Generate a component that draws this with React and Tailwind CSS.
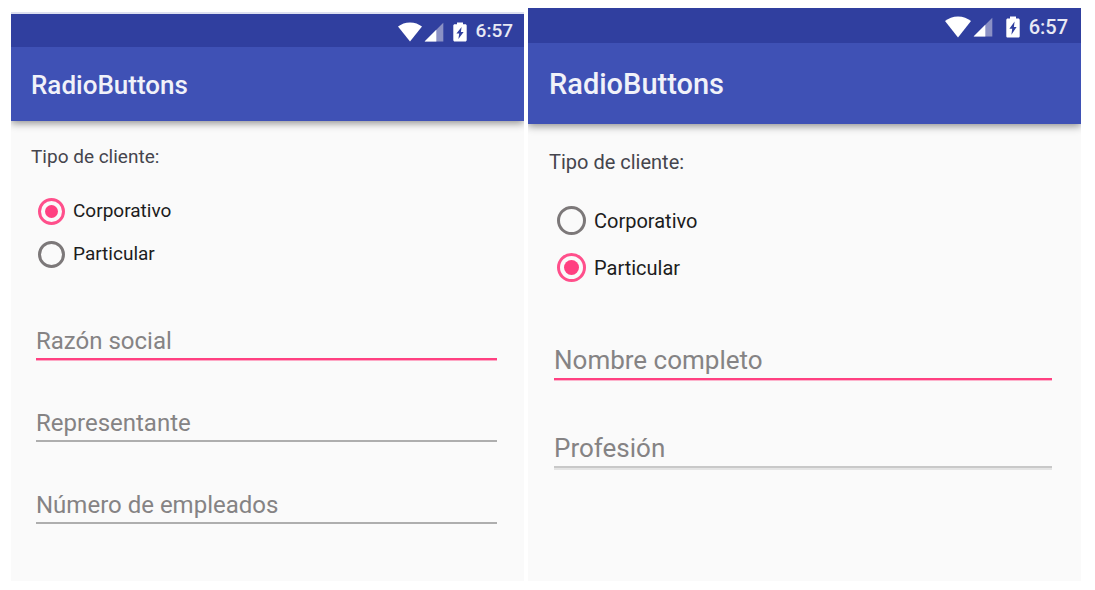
import React, { useState } from "react";

const styles = {
  small: {
    screen: "mt-1 border-t-2 border-[#dcdff0]",
    status: "h-[33px] pr-[11px] pt-0.5 text-[19px]",
    wifi: "h-5 w-6",
    signal: "ml-0.5 h-5 w-5",
    battery: "ml-2 mr-2 h-5 w-4",
    bar: "h-[74px] px-5 pt-[3px] text-[26px]",
    body: "pt-6 pb-14",
    caption: "pl-5 text-[19px] leading-6",
    group: "mt-[21px] pl-[27px]",
    option: "h-[43px] gap-2 text-[19px]",
    radio: "size-[27px] before:size-[13px]",
    fields: "mt-11 gap-[42px] pl-[25px] pr-[27px]",
    field: "h-10 pt-[3px] text-2xl",
    focused: "border-[#ff4081] shadow-[0_1px_0_#fda9c5]",
    idle: "border-[#aeaeae]",
  },
  large: {
    screen: "",
    status: "h-[35px] pr-[13px] pt-0.5 text-[20px]",
    wifi: "h-[22px] w-[26px]",
    signal: "ml-0.5 h-5 w-5",
    battery: "ml-3 mr-2 h-[22px] w-4",
    bar: "h-[81px] px-[21px] pt-[3px] text-[29px]",
    body: "pt-6 pb-28",
    caption: "pl-[21px] text-[20px] leading-7",
    group: "mt-[21px] pl-[29px]",
    option: "h-[47px] gap-2 text-[20px]",
    radio: "size-[29px] before:size-[15px]",
    fields: "mt-[47px] gap-[46px] pl-[26px] pr-[29px]",
    field: "h-[42px] pt-[3px] text-[26px]",
    focused: "border-[#ff4081] shadow-[0_1px_0_#fcb4cc]",
    idle: "border-[#c8c8c8] shadow-[0_2px_0_#e4e4e4]",
  },
};

function StatusBar({ s }) {
  return (
    <div className={`flex items-center justify-end bg-[#303f9f] font-medium text-[#e8e9f4] ${s.status}`}>
      <svg className={s.wifi} viewBox="0 0 24 20" preserveAspectRatio="none" aria-hidden="true">
        <path d="M0 4.6C3.2 1.9 7.3.4 12 .4s8.800 1.500 12 4.200L12 19.600Z" fill="#fff" />
      </svg>
      <svg className={s.signal} viewBox="0 0 20 20" aria-hidden="true">
        <path d="M19.300.800V19.500H.600Z" fill="#8b91c5" />
        <path d="M12.300 7.800V19.500H.600Z" fill="#fff" />
      </svg>
      <svg className={s.battery} viewBox="0 0 16 20" preserveAspectRatio="none" aria-hidden="true">
        <path
          fillRule="evenodd"
          d="M5 .400h6v1.900h2.200c.9 0 1.500.6 1.500 1.400v14.400c0 .8-.6 1.500-1.500 1.500H2.800c-.9 0-1.500-.7-1.500-1.500V3.700c0-.8.6-1.400 1.500-1.400H5ZM9.600 5 4.400 11.500h2.800L6.400 17l5.200-7H8.900Z"
          fill="#fff"
        />
      </svg>
      <span>6:57</span>
    </div>
  );
}

function Screen({ size, initial, fields }) {
  const s = styles[size];
  const [type, setType] = useState(initial);
  return (
    <section className={`flex flex-col bg-[#fafafa] ${s.screen}`}>
      <StatusBar s={s} />
      <header className={`flex items-center bg-[#3f51b5] font-medium text-[#f1f2f9] shadow-[0_2px_8px_rgba(0,0,0,0.45)] [clip-path:inset(0_0_-14px_0)] ${s.bar}`}>
        <h1>RadioButtons</h1>
      </header>
      <form className={s.body}>
        <fieldset>
          <legend className={`text-[#45454d] ${s.caption}`}>Tipo de cliente:</legend>
          <div className={s.group}>
            {["Corporativo", "Particular"].map((name) => (
              <label key={name} className={`flex items-center text-[#1c1c20] ${s.option}`}>
                <input
                  type="radio"
                  name={`tipo-${size}`}
                  checked={type === name}
                  onChange={() => setType(name)}
                  className={`grid shrink-0 appearance-none place-items-center rounded-full border-3 border-[#7c7879] before:rounded-full checked:border-[#ff4f8b] checked:before:bg-[#ff4081] ${s.radio}`}
                />
                {name}
              </label>
            ))}
          </div>
        </fieldset>
        <div className={`flex flex-col ${s.fields}`}>
          {fields.map((name, i) => (
            <input
              key={name}
              type="text"
              aria-label={name}
              placeholder={name}
              className={`w-full border-b-2 bg-transparent outline-none placeholder:text-[#858384] ${s.field} ${i === 0 ? s.focused : s.idle}`}
            />
          ))}
        </div>
      </form>
    </section>
  );
}

export default function App() {
  return (
    <main className="grid min-h-screen grid-cols-[513fr_553fr] gap-1 bg-white pt-2 pr-3.5 pb-[9px] pl-[11px] font-['Roboto',sans-serif]">
      <Screen
        size="small"
        initial="Corporativo"
        fields={["Razón social", "Representante", "Número de empleados"]}
      />
      <Screen size="large" initial="Particular" fields={["Nombre completo", "Profesión"]} />
    </main>
  );
}
